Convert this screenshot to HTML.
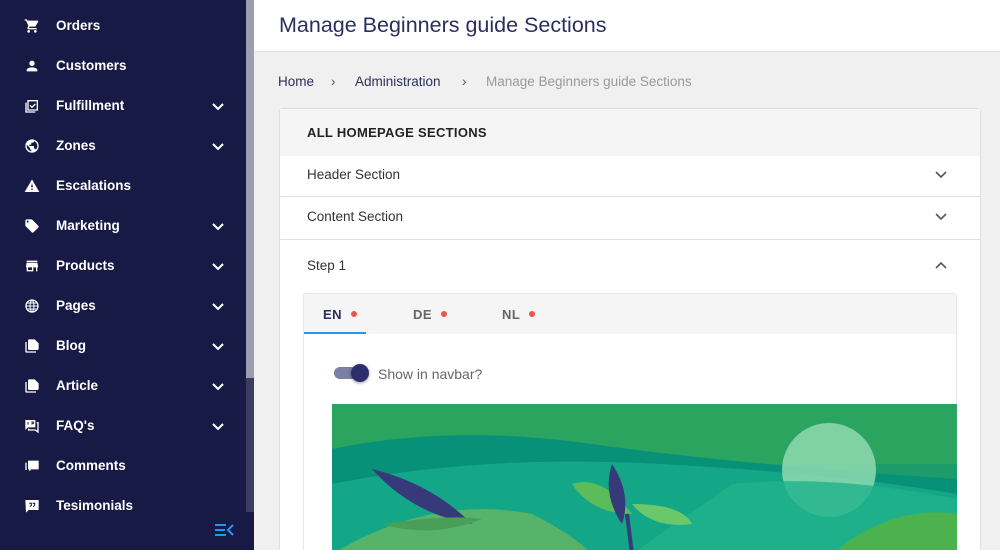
<!DOCTYPE html>
<html><head><style>
*{margin:0;padding:0;box-sizing:border-box}
html,body{width:1000px;height:550px;overflow:hidden}
body{font-family:"Liberation Sans",sans-serif;background:#f0f0f0;position:relative}
.sb{position:absolute;left:0;top:0;width:254px;height:550px;background:#171a45}
.thumb{position:absolute;left:246px;top:0;width:8px;height:378px;background:#9c9db0}
.track{position:absolute;left:246px;top:378px;width:8px;height:134px;background:#3a3c60}
.it{position:absolute;left:0;width:246px;height:40px;color:#fff;font-size:13.5px;font-weight:bold}
.it .ic{position:absolute;left:24px;top:12px;width:16px;height:16px}
.it .tx{position:absolute;left:56px;top:12px}
.it .ch{position:absolute;left:211px;top:16px}
.hdr{position:absolute;left:254px;top:0;width:746px;height:52px;background:#fff;border-bottom:1px solid #ddd}
.hdr h1{position:absolute;left:25px;top:13px;font-weight:normal;font-size:21.5px;color:#2c2e5e}
.bc{position:absolute;top:74px;font-size:13.5px}
.card{position:absolute;left:279px;top:108px;width:702px;height:460px;background:#fff;border:1px solid #ddd;border-radius:4px}
.ct{position:absolute;left:0;top:0;width:700px;height:47px;background:#f5f5f5}
.ct span{position:absolute;left:27px;top:16px;font-size:13px;font-weight:bold;color:#222;letter-spacing:.3px}
.row{position:absolute;left:0;width:700px;border-bottom:1px solid #dfe0ee;font-size:13.5px;color:#333}
.row span{position:absolute;left:27px}
.row svg{position:absolute;left:654px}
.inner{position:absolute;left:303px;top:293px;width:654px;height:260px;background:#fff;border:1px solid #e6e6e6;border-radius:3px}
.tabs{position:absolute;left:0;top:0;width:652px;height:40px;background:#f5f5f5}
.tab{position:absolute;top:13px;font-size:13px;font-weight:bold;color:#666;letter-spacing:.5px}
.dot{display:inline-block;width:6px;height:6px;border-radius:50%;background:#ef5350;margin-left:9px;vertical-align:2px}
</style></head><body>
<div class="sb"></div>
<div class="thumb"></div><div class="track"></div>

<div class="it" style="top:6px"><svg class="ic" viewBox="0 0 24 24"><path fill="#fff" d="M7 18a2 2 0 100 4 2 2 0 000-4zM1 2v2h2l3.6 7.6-1.350 2.4C5 15.4 5.5 17 7 17h12v-2H7.4l1.1-2h7.45c.75 0 1.4-.4 1.75-1l3.6-6.5A1 1 0 0020.4 4H5.2L4.300 2H1zm16 16a2 2 0 100 4 2 2 0 000-4z"/></svg><span class="tx">Orders</span></div>
<div class="it" style="top:46px"><svg class="ic" viewBox="0 0 24 24"><path fill="#fff" d="M12 12a4 4 0 100-8 4 4 0 000 8zm0 2c-2.7 0-8 1.3-8 4v2h16v-2c0-2.7-5.3-4-8-4z"/></svg><span class="tx">Customers</span></div>
<div class="it" style="top:86px"><svg class="ic" viewBox="0 0 24 24"><path fill="none" stroke="#fff" stroke-width="2" d="M6 4h14v14H6zM3 7v14h14M9 11l3 3 5-5"/></svg><span class="tx">Fulfillment</span><svg class="ch" width="14" height="10" viewBox="0 0 14 10"><path d="M2 2l5 5 5-5" stroke="#fff" stroke-width="2" fill="none"/></svg></div>
<div class="it" style="top:126px"><svg class="ic" viewBox="0 0 24 24"><circle cx="12" cy="12" r="10" fill="#fff"/><path fill="#171a45" d="M11 19.9A8 8 0 014.2 10.2L9 15v1a2 2 0 002 2zm6.9-2.5A2 2 0 0016 16h-1v-3a1 1 0 00-1-1H8v-2h2a1 1 0 001-1V7h2a2 2 0 002-2v-.4a8 8 0 012.9 12.8z"/></svg><span class="tx">Zones</span><svg class="ch" width="14" height="10" viewBox="0 0 14 10"><path d="M2 2l5 5 5-5" stroke="#fff" stroke-width="2" fill="none"/></svg></div>
<div class="it" style="top:166px"><svg class="ic" viewBox="0 0 24 24"><path fill="#fff" d="M1 21h22L12 2zm12-3h-2v-2h2zm0-4h-2v-4h2z"/></svg><span class="tx">Escalations</span></div>
<div class="it" style="top:206px"><svg class="ic" viewBox="0 0 24 24"><path fill="#fff" d="M21.4 11.6l-9-9A2 2 0 0011 2H4a2 2 0 00-2 2v7c0 .55.2 1.05.6 1.4l9 9a2 2 0 002.8 0l7-7a2 2 0 000-2.8zM5.5 7a1.5 1.5 0 110-3 1.5 1.5 0 010 3z"/></svg><span class="tx">Marketing</span><svg class="ch" width="14" height="10" viewBox="0 0 14 10"><path d="M2 2l5 5 5-5" stroke="#fff" stroke-width="2" fill="none"/></svg></div>
<div class="it" style="top:246px"><svg class="ic" viewBox="0 0 24 24"><path fill="#fff" d="M20 4H4v2h16zm1 10v-2l-1-5H4l-1 5v2h1v6h10v-6h4v6h2v-6zm-9 4H6v-4h6z"/></svg><span class="tx">Products</span><svg class="ch" width="14" height="10" viewBox="0 0 14 10"><path d="M2 2l5 5 5-5" stroke="#fff" stroke-width="2" fill="none"/></svg></div>
<div class="it" style="top:286px"><svg class="ic" viewBox="0 0 24 24"><circle cx="12" cy="12" r="9" fill="none" stroke="#fff" stroke-width="2"/><path d="M3 12h18M12 3c-4 4-4 14 0 18M12 3c4 4 4 14 0 18M5 7.5h14M5 16.5h14" stroke="#fff" stroke-width="1.6" fill="none"/></svg><span class="tx">Pages</span><svg class="ch" width="14" height="10" viewBox="0 0 14 10"><path d="M2 2l5 5 5-5" stroke="#fff" stroke-width="2" fill="none"/></svg></div>
<div class="it" style="top:326px"><svg class="ic" viewBox="0 0 24 24"><path fill="#fff" d="M4 6H2v14a2 2 0 002 2h14v-2H4zm16-4H8a2 2 0 00-2 2v12a2 2 0 002 2h12a2 2 0 002-2V8l-6-6z"/></svg><span class="tx">Blog</span><svg class="ch" width="14" height="10" viewBox="0 0 14 10"><path d="M2 2l5 5 5-5" stroke="#fff" stroke-width="2" fill="none"/></svg></div>
<div class="it" style="top:366px"><svg class="ic" viewBox="0 0 24 24"><path fill="#fff" d="M4 6H2v14a2 2 0 002 2h14v-2H4zm16-4H8a2 2 0 00-2 2v12a2 2 0 002 2h12a2 2 0 002-2V8l-6-6z"/></svg><span class="tx">Article</span><svg class="ch" width="14" height="10" viewBox="0 0 14 10"><path d="M2 2l5 5 5-5" stroke="#fff" stroke-width="2" fill="none"/></svg></div>
<div class="it" style="top:406px"><svg class="ic" viewBox="0 0 24 24"><path fill="#fff" d="M2 3h15v11H6l-4 4z"/><path fill="none" stroke="#fff" stroke-width="2" d="M19 7h2v14l-4-3H7v-2"/><path d="M6 6v4M11 6h3v2h-2v2" stroke="#171a45" stroke-width="1.5" fill="none"/></svg><span class="tx">FAQ's</span><svg class="ch" width="14" height="10" viewBox="0 0 14 10"><path d="M2 2l5 5 5-5" stroke="#fff" stroke-width="2" fill="none"/></svg></div>
<div class="it" style="top:446px"><svg class="ic" viewBox="0 0 24 24"><path fill="#fff" d="M6 4h16v13H11l-3 3v-3H6z"/><path fill="none" stroke="#fff" stroke-width="2" d="M3 7v11"/></svg><span class="tx">Comments</span></div>
<div class="it" style="top:486px"><svg class="ic" viewBox="0 0 24 24"><path fill="#fff" d="M2 3h20v15H7l-4 4z"/><path d="M8 8h3v3l-2 2M13 8h3v3l-2 2" stroke="#171a45" stroke-width="1.6" fill="none"/></svg><span class="tx">Tesimonials</span></div>
<svg style="position:absolute;left:214px;top:523px" width="20" height="14" viewBox="0 0 20 14"><path d="M1 2h11M1 7h10M1 12h11M19 2l-5 5 5 5" stroke="#2196f3" stroke-width="2" fill="none"/></svg>

<div class="hdr"><h1>Manage Beginners guide Sections</h1></div>
<div class="bc" style="left:278px;color:#2c2e5e">Home</div>
<div class="bc" style="left:331px;color:#555">›</div>
<div class="bc" style="left:355px;color:#2c2e5e">Administration</div>
<div class="bc" style="left:462px;color:#555">›</div>
<div class="bc" style="left:486px;color:#999">Manage Beginners guide Sections</div>

<div class="card">
<div class="ct"><span>ALL HOMEPAGE SECTIONS</span></div>
<div class="row" style="top:47px;height:41px"><span style="top:11px">Header Section</span><svg style="top:14px" width="14" height="10" viewBox="0 0 14 10"><path d="M2 2l5 5 5-5" stroke="#555" stroke-width="1.6" fill="none"/></svg></div>
<div class="row" style="top:89px;height:42px"><span style="top:11px">Content Section</span><svg style="top:14px" width="14" height="10" viewBox="0 0 14 10"><path d="M2 2l5 5 5-5" stroke="#555" stroke-width="1.6" fill="none"/></svg></div>
<div class="row" style="top:131px;height:60px;border:none"><span style="top:18px">Step 1</span><svg style="top:20px" width="14" height="10" viewBox="0 0 14 10"><path d="M2 8l5-5 5 5" stroke="#555" stroke-width="1.6" fill="none"/></svg></div>
</div>

<div class="inner">
<div class="tabs"></div>
<div class="tab" style="left:19px;color:#2c2e5e">EN<span class="dot"></span></div>
<div class="tab" style="left:109px">DE<span class="dot"></span></div>
<div class="tab" style="left:198px">NL<span class="dot"></span></div>
<div style="position:absolute;left:0;top:38px;width:62px;height:2px;background:#2196f3"></div>
<div style="position:absolute;left:30px;top:73px;width:30px;height:12px;border-radius:6px;background:#7c7ea3"></div>
<div style="position:absolute;left:47px;top:70px;width:18px;height:18px;border-radius:50%;background:#2c2e6e;box-shadow:0 1px 3px rgba(0,0,0,.4)"></div>
<div style="position:absolute;left:74px;top:72px;font-size:14px;color:#666">Show in navbar?</div>
<svg style="position:absolute;left:28px;top:110px" width="625" height="150" viewBox="0 0 625 150">
<rect width="625" height="150" fill="#1d9b6a"/>
<rect width="625" height="60" fill="#2aa45f"/>
<path d="M0 45 Q120 20 260 40 T625 75 V150 H0Z" fill="#079179"/>
<path d="M0 80 Q150 50 330 60 T625 90 V150 H0Z" fill="#13a687"/>
<circle cx="497" cy="66" r="47" fill="#8fd9b0" opacity=".85"/>
<path d="M400 80 Q500 70 625 95 V150 H300Z" fill="#21b38c" opacity=".8"/>
<path d="M500 150 Q560 100 625 110 V150Z" fill="#4cb24d"/>
<path d="M0 150 Q100 90 200 110 Q240 130 260 150Z" fill="#58b36a"/>
<path d="M40 65 Q100 80 140 120 Q80 110 40 65Z" fill="#363a7a"/>
<path d="M50 120 Q120 110 150 115 Q100 135 50 120Z" fill="#4a9e5a"/>
<path d="M240 80 Q270 70 300 110 Q260 110 240 80Z" fill="#5bbd5a"/>
<path d="M280 60 Q300 90 290 120 Q270 90 280 60Z" fill="#363a7a"/>
<path d="M300 100 Q350 100 360 120 Q320 125 300 100Z" fill="#6ac86a"/>
<path d="M295 110 L300 150" stroke="#363a7a" stroke-width="4"/>
</svg>
</div>
</body></html>
